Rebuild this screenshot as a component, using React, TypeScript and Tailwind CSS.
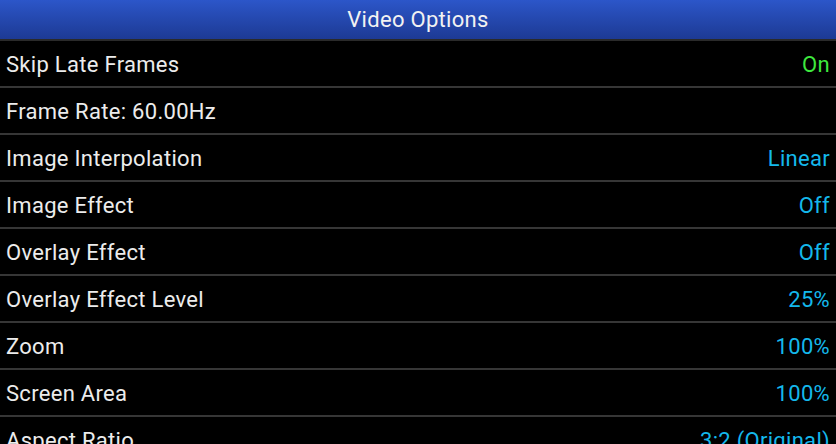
const rows: { label: string; value?: string; tone?: 'on' | 'val' }[] = [
  { label: 'Skip Late Frames', value: 'On', tone: 'on' },
  { label: 'Frame Rate: 60.00Hz' },
  { label: 'Image Interpolation', value: 'Linear', tone: 'val' },
  { label: 'Image Effect', value: 'Off', tone: 'val' },
  { label: 'Overlay Effect', value: 'Off', tone: 'val' },
  { label: 'Overlay Effect Level', value: '25%', tone: 'val' },
  { label: 'Zoom', value: '100%', tone: 'val' },
  { label: 'Screen Area', value: '100%', tone: 'val' },
  { label: 'Aspect Ratio', value: '3:2 (Original)', tone: 'val' },
]

export default function App() {
  return (
    <div className="w-[836px] h-[444px] overflow-hidden bg-black font-['Roboto',sans-serif] tracking-[0.3px]">
      <div className="h-[39px] flex items-center justify-center bg-gradient-to-b from-[#2c56c9] to-[#1d3a94] text-[22px] text-[#f2f2f2]">
        Video Options
      </div>
      <div className="h-[2px] bg-[#2a2a2a]" />
      {rows.map((r) => (
        <div
          key={r.label}
          className="h-[47px] flex items-center justify-between px-[6px] pt-[2px] border-b-2 border-[#363636] text-[22px]"
        >
          <span className="text-[#ececec]">{r.label}</span>
          {r.value && (
            <span className={r.tone === 'on' ? 'text-[#3ee83e]' : 'text-[#14b8ec]'}>{r.value}</span>
          )}
        </div>
      ))}
    </div>
  )
}
